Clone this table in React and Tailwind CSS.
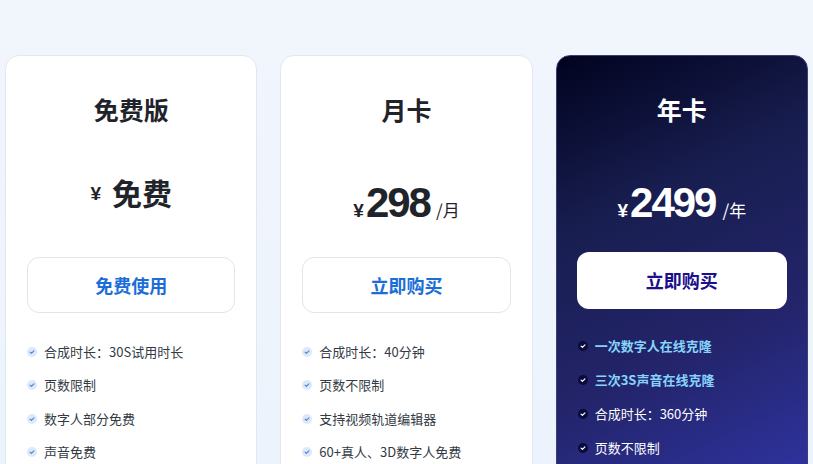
const cjk = { fontFamily: '"Noto Sans CJK SC", "Noto Sans", sans-serif' };
const num = { fontFamily: '"Liberation Sans", Arial, "Noto Sans CJK SC", sans-serif' };

function Check({ dark }) {
  return (
    <span
      className={
        'flex h-[10px] w-[10px] shrink-0 items-center justify-center rounded-full ' +
        (dark ? 'bg-[#0a0a3c]' : 'bg-[#dce9fb]')
      }
    >
      <svg viewBox="0 0 10 10" className="h-[8px] w-[8px]">
        <path
          d="M2.6 5.1 L4.3 6.7 L7.4 3.6"
          fill="none"
          stroke={dark ? '#ffffff' : '#4f86d6'}
          strokeWidth="1.5"
          strokeLinecap="round"
          strokeLinejoin="round"
        />
      </svg>
    </span>
  );
}

function Features({ items, dark }) {
  return (
    <ul className={'flex flex-col pl-[21px] ' + (dark ? 'mt-[28px] gap-[16px]' : 'mt-[30px] gap-[15.4px]')}>
      {items.map((f, i) => (
        <li key={i} className="flex h-[18px] items-center gap-[7px]">
          <Check dark={dark} />
          <span
            className={
              'text-[13px] leading-[18px] whitespace-nowrap ' +
              (dark ? (f.hl ? 'font-bold text-[#86d3fb]' : 'text-white') : 'text-[#333a44]')
            }
          >
            {f.t}
          </span>
        </li>
      ))}
    </ul>
  );
}

export default function App() {
  const free = ['合成时长：30S试用时长', '页数限制', '数字人部分免费', '声音免费'].map(t => ({ t }));
  const month = ['合成时长：40分钟', '页数不限制', '支持视频轨道编辑器', '60+真人、3D数字人免费'].map(t => ({ t }));
  const year = [
    { t: '一次数字人在线克隆', hl: true },
    { t: '三次3S声音在线克隆', hl: true },
    { t: '合成时长：360分钟' },
    { t: '页数不限制' },
  ];

  return (
    <div className="h-[464px] w-[813px] overflow-hidden bg-[linear-gradient(180deg,#f1f6fd_0%,#edf3fc_100%)]" style={cjk}>
      <div className="flex gap-[23px] px-[5px] pt-[55px]">
        {/* 免费版 */}
        <div className="h-[460px] flex-1 rounded-[14px] border border-[#e2e8f1] bg-white pt-[36px]">
          <div className="h-[34px] text-center text-[25px] font-bold leading-[34px] text-[#1f242b]">免费版</div>
          <div className="mt-[56px] flex h-[42px] items-center justify-center gap-[11px] pb-[23px] text-[#1f242b]">
            <span className="mt-[6px] text-[19px] font-bold" style={num}>¥</span>
            <span className="text-[30px] font-bold leading-none">免费</span>
          </div>
          <div className="mx-[21px] mt-[33px] flex h-[56px] items-center justify-center rounded-[12px] border border-[#e0e4eb] bg-white text-[18px] font-bold text-[#1b6ed8]">
            免费使用
          </div>
          <Features items={free} />
        </div>

        {/* 月卡 */}
        <div className="h-[460px] flex-1 rounded-[14px] border border-[#e2e8f1] bg-white pt-[36px]">
          <div className="h-[34px] text-center text-[25px] font-bold leading-[34px] text-[#1f242b]">月卡</div>
          <div className="mt-[56px] flex h-[42px] items-baseline justify-center leading-none text-[#1f242b]" style={num}>
            <span className="mr-[2px] text-[19px] font-bold">¥</span>
            <span className="text-[42px] font-bold tracking-[-2px]">298</span>
            <span className="ml-[6px] text-[17px]" style={cjk}>/月</span>
          </div>
          <div className="mx-[21px] mt-[33px] flex h-[56px] items-center justify-center rounded-[12px] border border-[#e0e4eb] bg-white text-[18px] font-bold text-[#1b6ed8]">
            立即购买
          </div>
          <Features items={month} />
        </div>

        {/* 年卡 */}
        <div className="h-[460px] flex-1 rounded-[14px] border border-[#3a3f78] bg-[linear-gradient(155deg,#01031f_0%,#181e50_32%,#23246a_62%,#3136aa_100%)] pt-[36px]">
          <div className="h-[34px] text-center text-[25px] font-bold leading-[34px] text-white">年卡</div>
          <div className="mt-[56px] flex h-[42px] items-baseline justify-center leading-none text-white" style={num}>
            <span className="mr-[2px] text-[19px] font-bold">¥</span>
            <span className="text-[42px] font-bold tracking-[-2px]">2499</span>
            <span className="ml-[7px] text-[17px]" style={cjk}>/年</span>
          </div>
          <div className="mx-[20px] mt-[28px] flex h-[57px] items-center justify-center rounded-[12px] bg-white text-[18px] font-bold text-[#1b0f8a]">
            立即购买
          </div>
          <Features items={year} dark />
        </div>
      </div>
    </div>
  );
}
